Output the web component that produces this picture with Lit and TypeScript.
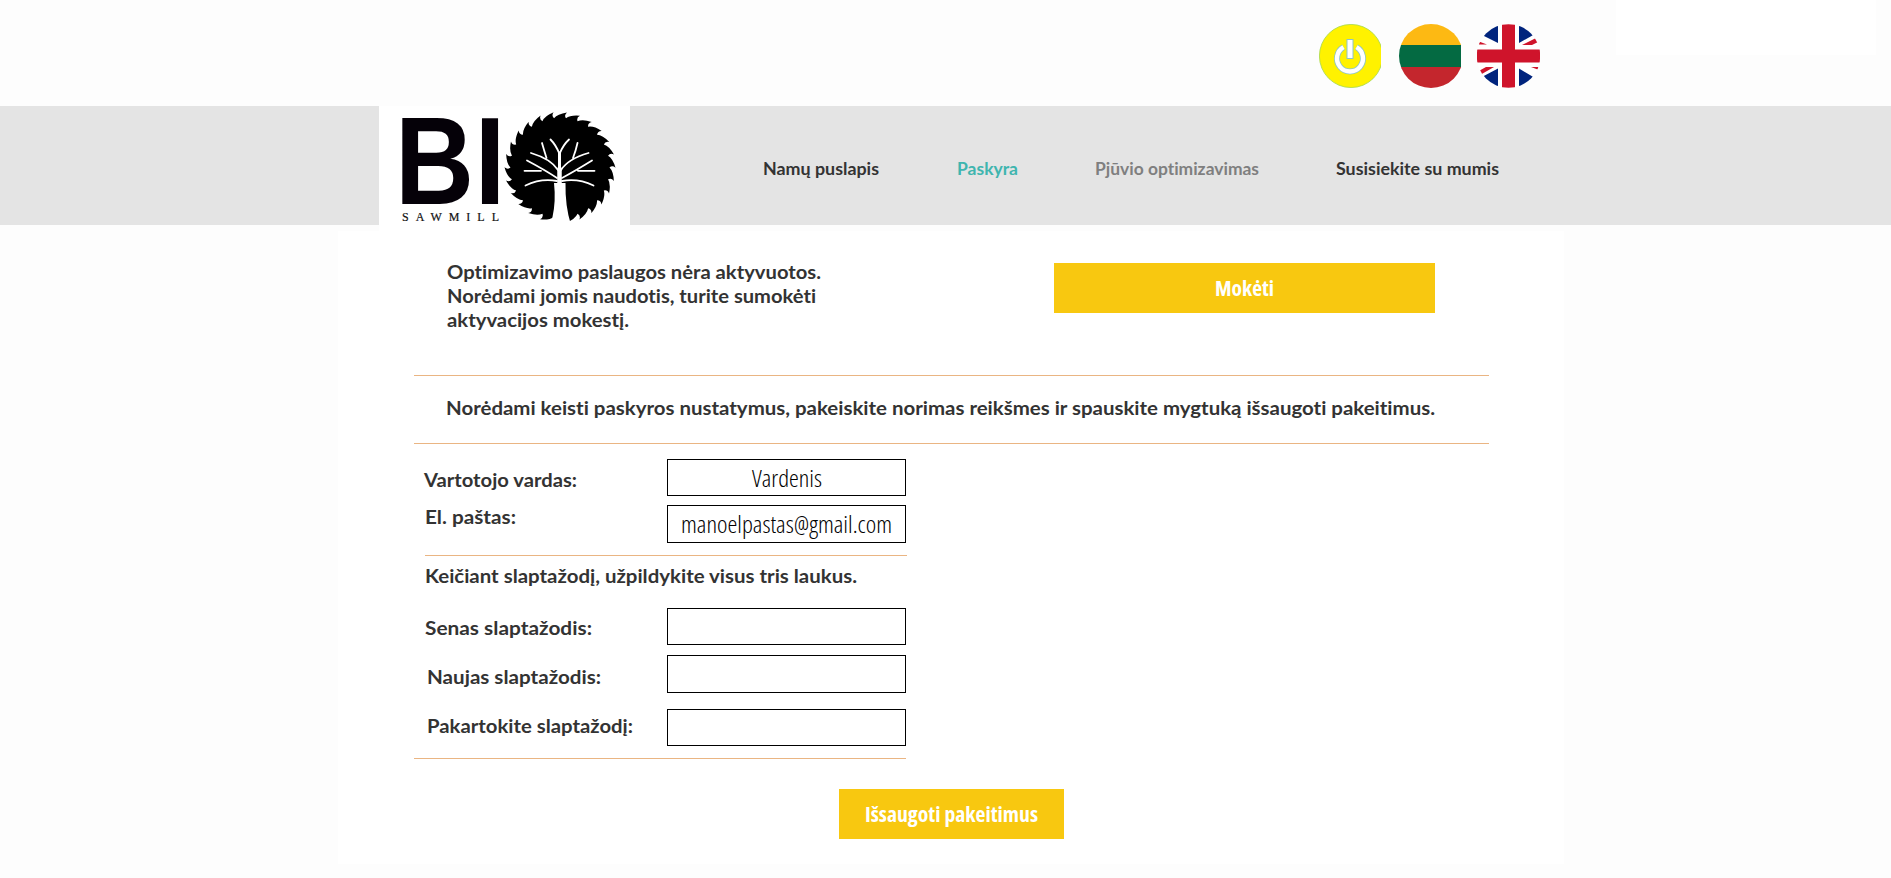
import { LitElement, html, svg, css } from "lit";
import { customElement } from "lit/decorators.js";

const fit = (text: string, width: number, cls: string, height = 24, baseline = 18) => html`
  <svg class="fit ${cls}" width=${width} height=${height} role="img" aria-label=${text}>
    <text x="0" y=${baseline} textLength=${width} lengthAdjust="spacingAndGlyphs">${text}</text>
  </svg>`;

// Circular blade: each tooth rises clockwise to a hooked tip, then drops back to the rim.
const sawPath = () => {
  const n = 26, R = 55.5, r = 49.5;
  const s = (Math.PI * 2) / n;
  const p = (a: number, d: number) => `${(d * Math.cos(a)).toFixed(2)} ${(d * Math.sin(a)).toFixed(2)}`;
  let d = `M${p(0, r)}`;
  for (let i = 0; i < n; i++) {
    const a = i * s;
    d += `Q${p(a + s * 0.3, R - 1.8)} ${p(a + s * 1.02, R)}Q${p(a + s * 0.8, R - 3)} ${p(a + s, r)}`;
  }
  return d + "Z";
};

@customElement("app-root")
export class AppRoot extends LitElement {
  static styles = css`
    :host { display: block; height: 878px; background: #fdfdfd; overflow: hidden; color: #333; font-family: Lato, "Open Sans", sans-serif; font-variant-ligatures: none; }
    * { box-sizing: border-box; }
    svg { display: block; overflow: visible; fill: #333; flex: none; }
    .top { height: 106px; display: flex; padding-left: 1319px; }
    .icons { display: flex; padding-top: 24px; gap: 16px; width: 297px; }
    .lt { margin-left: 2px; }
    .corner { width: 260px; height: 55px; background: #fff; }
    .head { height: 119px; background: #e4e4e4; display: flex; padding-left: 379px; }
    .logo { width: 251px; height: 125px; background: #fff; flex: none; }
    .nav { display: flex; padding: 51px 0 0 133px; }
    .g1 { width: 78px; }
    .g2 { width: 77px; }
    .body { font-size: 18px; font-weight: 700; }
    .menu { font-size: 16.5px; font-weight: 700; }
    .active { fill: #3fb5af; }
    .muted { fill: #7f7f7f; }
    .panel { width: 1226px; height: 633px; margin: 6px 0 0 338px; background: #fff; padding: 32px 75px 0 76px; }
    .pay { display: flex; justify-content: space-between; height: 112px; padding: 0 54px 0 33px; }
    .lines { margin-top: -2px; }
    .btn { border: 0; padding: 0; height: 50px; background: #f8c810; display: flex; align-items: center; justify-content: center; }
    .btn svg { fill: #fff; font: 700 20.5px "Open Sans", sans-serif; font-stretch: 75%; }
    .wide { width: 381px; }
    .save { width: 225px; margin: 30px 0 0 425px; }
    .rule { height: 1px; background: #eab583; }
    .note { height: 67px; padding: 21px 0 0 32px; }
    .row { display: flex; justify-content: space-between; width: 492px; align-items: flex-start; }
    .box { width: 239px; height: 37px; border: 1px solid #000; background: #fff; display: flex; justify-content: center; }
    .box.tall { height: 38px; }
    .value { fill: #000; font: 300 24px "Open Sans", sans-serif; font-stretch: 75%; }
    .r1 { margin-top: 15px; } .r1 .fit.body { margin: 10px 0 0 10px; }
    .r2 { margin-top: 9px; } .r2 .fit.body { margin: 1px 0 0 11px; }
    .short { width: 482px; margin: 12px 0 0 11px; }
    .hint { height: 52px; padding: 9px 0 0 11px; }
    .r3 .fit.body { margin: 9px 0 0 11px; }
    .r4 { margin-top: 10px; } .r4 .fit.body { margin: 11px 0 0 13px; }
    .r5 { margin-top: 16px; } .r5 .fit.body { margin: 6px 0 0 13px; }
    .end { width: 492px; margin-top: 12px; }
    .bi { font: 700 124.5px "Liberation Sans", sans-serif; fill: #050108; }
    .mill { font: 12px "Liberation Serif", serif; fill: #111; stroke: #111; stroke-width: .2; }
  `;

  icons() {
    return html`<div class="icons">
      <svg width="62" height="64" viewBox="0 0 62 64">
        <clipPath id="c"><rect width="62" height="64" /></clipPath>
        <g clip-path="url(#c)"><circle cx="32" cy="32" r="31.6" fill="#fff200" stroke="#a5d84a" stroke-width=".8" />
        <path d="M24.500 23.200A13 13 0 1 0 37.500 23.200" fill="none" stroke="#8ec4c8" stroke-width="6" />
        <path d="M24.500 23.200A13 13 0 1 0 37.500 23.200" fill="none" stroke="#fff" stroke-width="4.400" />
        <rect x="28" y="15.500" width="6" height="19" fill="#fff" stroke="#8ec4c8" stroke-width="1" /></g>
      </svg>
      <svg class="lt" width="62" height="64" viewBox="0 0 62 64">
        <clipPath id="l"><rect width="62" height="64" /></clipPath>
        <clipPath id="m"><circle cx="32" cy="32" r="32" /></clipPath>
        <g clip-path="url(#l)"><g clip-path="url(#m)"><path fill="#fdb913" d="M0 0h64v22H0z" /><path fill="#046a42" d="M0 21h64v22H0z" /><path fill="#c4262d" d="M0 43h64v22H0z" /></g></g>
      </svg>
      <svg width="63" height="64" viewBox="0 0 63 64">
        <clipPath id="u"><circle cx="31.500" cy="32" r="31.800" /></clipPath>
        <g clip-path="url(#u)"><path fill="#fff" d="M0 0h63v64H0z" />
        <path fill="#00247d" d="M3 10L21 19V0H8zM42 0V19L58 10L52 0zM3 54L21 44.500V64H8zM42 64V44.500L58 54L52 64z" />
        <path fill="#cf142b" d="M2 17.500L10 20.500H2zM45 21L61 13V18L55 21zM54 43H62V46zM3 51L17 43H9L0 48zM25 0h13v64H25zM0 25.500h63v13H0z" /></g>
      </svg>
    </div>`;
  }

  logo() {
    return html`<svg class="logo" width="251" height="125" viewBox="379 105 251 125">
      <rect x="379" y="105" width="251" height="125" fill="#fff" />
      <text class="bi" x="395" y="203.300" textLength="79" lengthAdjust="spacingAndGlyphs">B</text>
      <text class="bi" x="474.500" y="203.300" textLength="31" lengthAdjust="spacingAndGlyphs">I</text>
      <text class="mill" x="402" y="220" textLength="97">SAWMILL</text>
      <path transform="translate(560 166.500)" d=${sawPath()} fill="#000" />
      ${svg`<path fill="#fff" d="M554 182Q556 200 552.500 216L550.500 224H571Q565 205 565.500 182Z"/>
      <g fill="none" stroke="#fff" stroke-width="1.800" stroke-linecap="round">
        <path stroke-width="4.500" d="M559.500 186V168"/><path stroke-width="3" d="M559.500 168V152"/>
        <path d="M559.500 153Q556 144 550.500 138.500M559.500 153Q563 144 569 138.500"/>
        <path d="M558 169Q551 158 531 152M546.500 157Q544 149 542 142"/>
        <path d="M561 169Q568 158 588.500 152M573 157Q576 149 577.500 142"/>
        <path d="M557 177Q545 169 527 159.500M541 169.800H524.500M557 180Q541 177 525.500 184.500"/>
        <path d="M562 177Q575 170 592 159.500M578 169.800H594.500M562 180Q578 177 593.500 184.500"/>
      </g>`}
    </svg>`;
  }

  render() {
    return html`
      <div class="top">${this.icons()}<div class="corner"></div></div>
      <div class="head">
        ${this.logo()}
        <div class="nav">
          ${fit("Namų puslapis", 116, "menu")}<span class="g1"></span>
          ${fit("Paskyra", 61, "menu active")}<span class="g2"></span>
          ${fit("Pjūvio optimizavimas", 164, "menu muted")}<span class="g2"></span>
          ${fit("Susisiekite su mumis", 163, "menu")}
        </div>
      </div>
      <div class="panel">
        <div class="pay">
          <div class="lines">
            ${fit("Optimizavimo paslaugos nėra aktyvuotos.", 374, "body")}
            ${fit("Norėdami jomis naudotis, turite sumokėti", 369, "body")}
            ${fit("aktyvacijos mokestį.", 182, "body")}
          </div>
          <button class="btn wide">${fit("Mokėti", 59, "", 24, 20)}</button>
        </div>
        <div class="rule"></div>
        <div class="note">${fit("Norėdami keisti paskyros nustatymus, pakeiskite norimas reikšmes ir spauskite mygtuką išsaugoti pakeitimus.", 989, "body")}</div>
        <div class="rule"></div>
        <div class="row r1">${fit("Vartotojo vardas:", 153, "body")}<div class="box">${fit("Vardenis", 70, "value", 35, 27)}</div></div>
        <div class="row r2">${fit("El. paštas:", 91, "body")}<div class="box tall">${fit("manoelpastas@gmail.com", 211, "value", 36, 27)}</div></div>
        <div class="rule short"></div>
        <div class="hint">${fit("Keičiant slaptažodį, užpildykite visus tris laukus.", 432, "body")}</div>
        <div class="row r3">${fit("Senas slaptažodis:", 167, "body")}<div class="box"></div></div>
        <div class="row r4">${fit("Naujas slaptažodis:", 174, "body")}<div class="box tall"></div></div>
        <div class="row r5">${fit("Pakartokite slaptažodį:", 206, "body")}<div class="box"></div></div>
        <div class="rule end"></div>
        <button class="btn save">${fit("Išsaugoti pakeitimus", 173, "", 24, 20)}</button>
      </div>`;
  }
}
